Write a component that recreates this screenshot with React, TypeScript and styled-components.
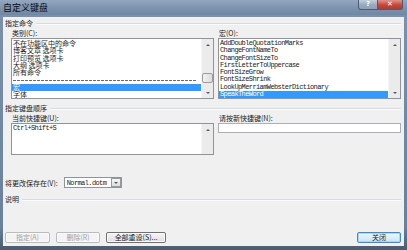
import React from "react";
import styled, { createGlobalStyle } from "styled-components";

const GlobalStyle = createGlobalStyle`
  html, body { margin: 0; padding: 0; background: #ffffff; }
  body { width: 407px; height: 250px; overflow: hidden; }
`;

const Window = styled.div`
  width: 407px;
  height: 250px;
  display: flex;
  flex-direction: column;
  font-family: "Noto Sans CJK SC", "Noto Sans", sans-serif;
  color: #1b1b1b;
  background: #6f87a3;
`;

const TitleBar = styled.div`
  height: 15px;
  flex: none;
  display: flex;
  align-items: flex-start;
  justify-content: space-between;
  padding-left: 3px;
  background: linear-gradient(to bottom, #93a7bf 0%, #7c92ad 55%, #7088a4 100%);
`;

const Title = styled.div`
  font-size: 9px;
  line-height: 15px;
  color: #0a0a0a;
`;

const Caption = styled.div`
  display: flex;
  margin-right: 4px;
`;

const CaptionButton = styled.div<{ $close?: boolean }>`
  width: ${(p) => (p.$close ? 25 : 20)}px;
  height: 10px;
  box-sizing: border-box;
  display: flex;
  align-items: center;
  justify-content: center;
  border: 1px solid #4c5d72;
  border-top: none;
  border-left: ${(p) => (p.$close ? "none" : "1px solid #4c5d72")};
  border-radius: ${(p) => (p.$close ? "0 0 3px 0" : "0 0 0 3px")};
  background: ${(p) =>
    p.$close
      ? "linear-gradient(to bottom, #e0938a, #c8463a 55%, #b8382c)"
      : "linear-gradient(to bottom, #c3cedb, #98a9be 55%, #8ea0b7)"};
  color: #ffffff;
  font-family: "DejaVu Sans", sans-serif;
  font-size: 7px;
  font-weight: bold;
  line-height: 1;
`;

const Frame = styled.div`
  flex: 1;
  display: flex;
  padding: 2px 3px 4px 3px;
  background: linear-gradient(to bottom, #7a90ab, #6a819d 90%, #4b5b6f);
`;

const Body = styled.div`
  flex: 1;
  display: flex;
  flex-direction: column;
  background: #f0f0f0;
  padding: 0 3px 3px 2px;
`;

const SectionHeader = styled.div<{ $top: number }>`
  display: flex;
  align-items: center;
  gap: 3px;
  height: 9px;
  margin-top: ${(p) => p.$top}px;
  font-size: 7px;
  line-height: 9px;
  &::after {
    content: "";
    flex: 1;
    border-top: 1px solid #d5dbe1;
    border-bottom: 1px solid #fbfbfb;
  }
`;

const Columns = styled.div<{ $top: number }>`
  display: flex;
  gap: 4px;
  padding-left: 6px;
  margin-top: ${(p) => p.$top}px;
`;

const Column = styled.div<{ $width: number }>`
  width: ${(p) => p.$width}px;
  display: flex;
  flex-direction: column;
`;

const Label = styled.div`
  height: 9px;
  font-size: 7px;
  line-height: 9px;
  padding-left: 1px;
  white-space: nowrap;
`;

const ListBox = styled.div<{ $height: number }>`
  height: ${(p) => p.$height}px;
  box-sizing: border-box;
  border: 1px solid #8e949c;
  background: #ffffff;
  display: flex;
  overflow: hidden;
`;

const Items = styled.div`
  flex: 1;
  padding-top: 1px;
  overflow: hidden;
`;

const Item = styled.div<{ $selected?: boolean; $mono?: boolean }>`
  height: 7.3px;
  line-height: 7.3px;
  padding-left: 1px;
  white-space: nowrap;
  font-size: 7px;
  font-family: ${(p) =>
    p.$mono ? '"Liberation Mono", monospace' : '"Noto Sans CJK SC", sans-serif'};
  letter-spacing: ${(p) => (p.$mono ? "-0.6px" : "0")};
  background: ${(p) => (p.$selected ? "#3399ff" : "transparent")};
  color: ${(p) => (p.$selected ? "#ffffff" : "#1b1b1b")};
`;

const Divider = styled.div`
  height: 7.3px;
  display: flex;
  align-items: center;
  padding: 0 4px 0 1px;
  &::after {
    content: "";
    flex: 1;
    height: 1px;
    background: repeating-linear-gradient(to right, #6a6a6a 0 3px, transparent 3px 4px);
  }
`;

const ScrollBar = styled.div`
  width: 11px;
  flex: none;
  display: flex;
  flex-direction: column;
  background: #ebebeb;
  border-left: 1px solid #f5f5f5;
`;

const ArrowBox = styled.div`
  height: 11px;
  flex: none;
  display: flex;
  align-items: center;
  justify-content: center;
`;

const Arrow = styled.div<{ $down?: boolean }>`
  width: 0;
  height: 0;
  border-left: 2px solid transparent;
  border-right: 2px solid transparent;
  ${(p) =>
    p.$down ? "border-top: 2px solid #5a5a5a;" : "border-bottom: 2px solid #5a5a5a;"}
`;

const Track = styled.div`
  flex: 1;
  display: flex;
  flex-direction: column;
  padding-top: 23px;
`;

const Thumb = styled.div`
  height: 10px;
  box-sizing: border-box;
  border: 1px solid #9b9b9b;
  border-radius: 2px;
  background: linear-gradient(to right, #f2f2f2, #dcdcdc);
`;

const Input = styled.div`
  height: 10px;
  box-sizing: border-box;
  border: 1px solid #a9b0b8;
  background: #ffffff;
`;

const SaveRow = styled.div`
  display: flex;
  align-items: center;
  gap: 6px;
  margin-top: 22px;
  font-size: 7px;
`;

const Select = styled.div`
  width: 58px;
  height: 11px;
  box-sizing: border-box;
  border: 1px solid #8e949c;
  background: #ffffff;
  display: flex;
  align-items: center;
  font-family: "Liberation Mono", monospace;
  font-size: 7px;
  letter-spacing: -0.6px;
  padding-left: 2px;
`;

const SelectText = styled.span`
  flex: 1;
`;

const DropButton = styled.div`
  width: 10px;
  height: 9px;
  box-sizing: border-box;
  border: 1px solid #9a9a9a;
  background: linear-gradient(#f6f6f6, #dedede);
  display: flex;
  align-items: center;
  justify-content: center;
`;

const Spacer = styled.div`
  flex: 1;
`;

const ButtonRow = styled.div`
  display: flex;
  gap: 6px;
`;

const Button = styled.div<{ $width: number; $disabled?: boolean; $focus?: boolean; $right?: boolean }>`
  width: ${(p) => p.$width}px;
  height: 11px;
  box-sizing: border-box;
  margin-left: ${(p) => (p.$right ? "auto" : "0")};
  border: 1px solid ${(p) => (p.$disabled ? "#b8bcc0" : p.$focus ? "#3c8dc7" : "#707070")};
  border-radius: 2px;
  background: ${(p) =>
    p.$disabled
      ? "#f4f4f4"
      : p.$focus
      ? "linear-gradient(#eaf5fc, #dbeefa 50%, #c5e2f6)"
      : "linear-gradient(#f4f4f4, #ebebeb 50%, #dcdcdc)"};
  box-shadow: ${(p) => (p.$focus ? "inset 0 0 0 1px #a9d8f5" : "inset 0 0 0 1px #fafafa")};
  color: ${(p) => (p.$disabled ? "#a2a2a2" : "#1b1b1b")};
  font-size: 7px;
  line-height: 9px;
  text-align: center;
  white-space: nowrap;
`;

const categories = ["不在功能区中的命令", "博客文章 选项卡", "打印预览 选项卡", "大纲 选项卡", "所有命令"];

const macros = [
  "AddDoubleQuotationMarks",
  "ChangeFontNameTo",
  "ChangeFontSizeTo",
  "FirstLetterToUppercase",
  "FontSizeGrow",
  "FontSizeShrink",
  "LookUpMerriamWebsterDictionary",
  "SpeakTheWord",
];

function Scroll({ thumb }: { thumb?: boolean }) {
  return (
    <ScrollBar>
      <ArrowBox>
        <Arrow />
      </ArrowBox>
      <Track>{thumb && <Thumb />}</Track>
      <ArrowBox>
        <Arrow $down />
      </ArrowBox>
    </ScrollBar>
  );
}

export default function App() {
  return (
    <Window>
      <GlobalStyle />
      <TitleBar>
        <Title>自定义键盘</Title>
        <Caption>
          <CaptionButton>?</CaptionButton>
          <CaptionButton $close>✕</CaptionButton>
        </Caption>
      </TitleBar>
      <Frame>
        <Body>
          <SectionHeader $top={2}>指定命令</SectionHeader>
          <Columns $top={1}>
            <Column $width={203}>
              <Label>类别(C):</Label>
              <ListBox $height={61}>
                <Items>
                  {categories.map((c) => (
                    <Item key={c}>{c}</Item>
                  ))}
                  <Divider />
                  <Item $selected>宏</Item>
                  <Item>字体</Item>
                </Items>
                <Scroll thumb />
              </ListBox>
            </Column>
            <Column $width={183}>
              <Label>宏(O):</Label>
              <ListBox $height={61}>
                <Items>
                  {macros.map((m, i) => (
                    <Item key={m} $mono $selected={i === macros.length - 1}>
                      {m}
                    </Item>
                  ))}
                </Items>
                <Scroll />
              </ListBox>
            </Column>
          </Columns>
          <SectionHeader $top={5}>指定键盘顺序</SectionHeader>
          <Columns $top={1}>
            <Column $width={203}>
              <Label>当前快捷键(U):</Label>
              <ListBox $height={32}>
                <Items>
                  <Item $mono>Ctrl+Shift+S</Item>
                </Items>
                <Scroll />
              </ListBox>
            </Column>
            <Column $width={183}>
              <Label>请按新快捷键(N):</Label>
              <Input />
            </Column>
          </Columns>
          <SaveRow>
            <span>将更改保存在(V):</span>
            <Select>
              <SelectText>Normal.dotm</SelectText>
              <DropButton>
                <Arrow $down />
              </DropButton>
            </Select>
          </SaveRow>
          <SectionHeader $top={7}>说明</SectionHeader>
          <Spacer />
          <ButtonRow>
            <Button $width={45} $disabled>
              指定(A)
            </Button>
            <Button $width={44} $disabled>
              删除(R)
            </Button>
            <Button $width={60}>全部重设(S)...</Button>
            <Button $width={44} $focus $right>
              关闭
            </Button>
          </ButtonRow>
        </Body>
      </Frame>
    </Window>
  );
}
